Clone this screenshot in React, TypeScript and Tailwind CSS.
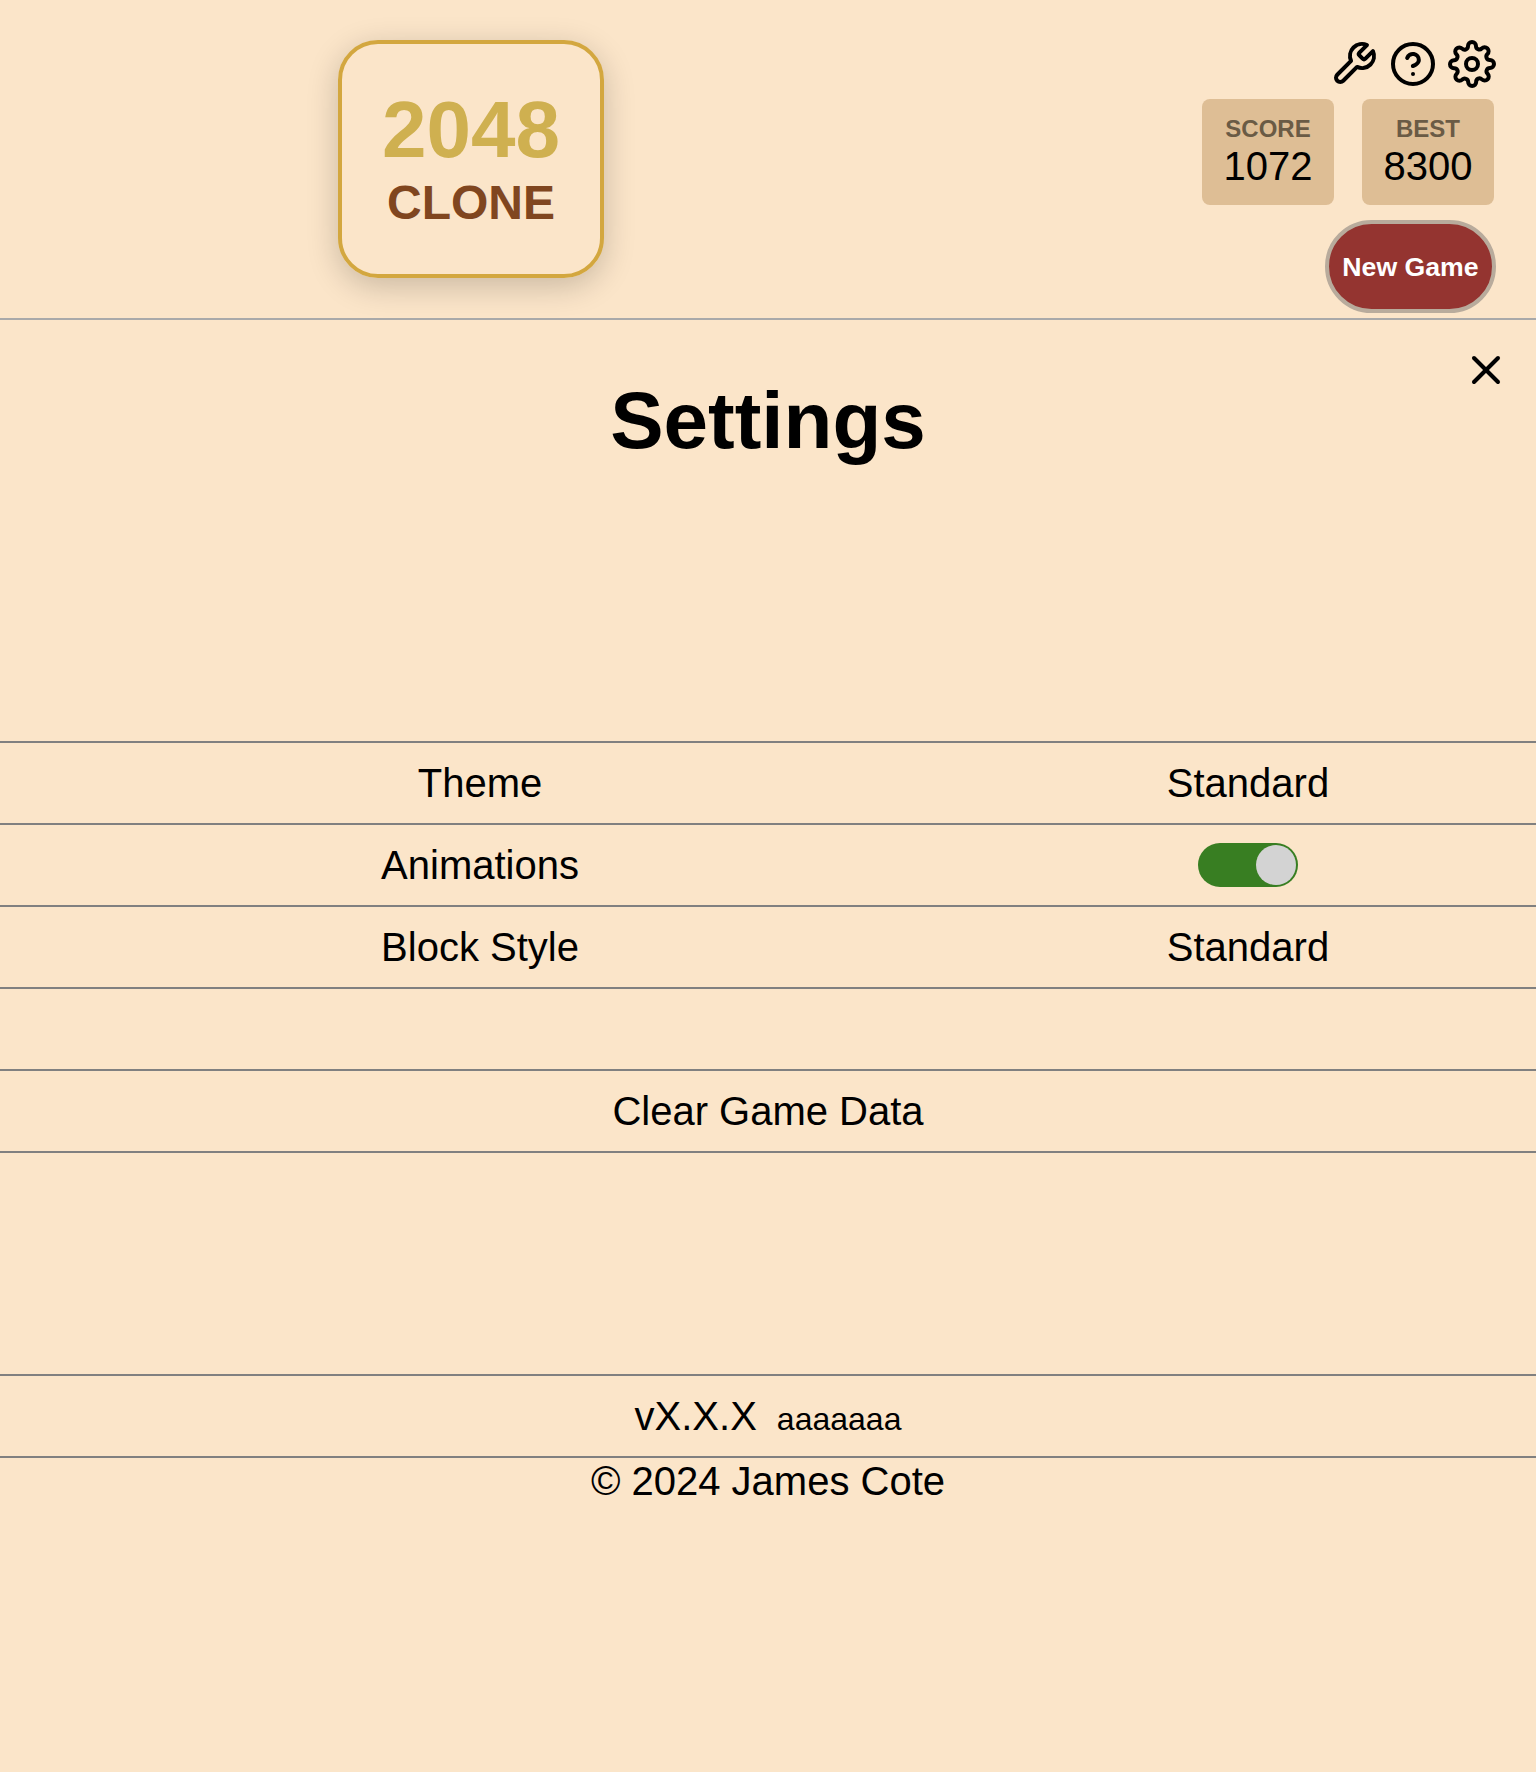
import type { ReactNode } from 'react';
import { FiHelpCircle, FiSettings, FiTool, FiX } from 'react-icons/fi';

function ScoreBox({ label, value }: { label: string; value: number }) {
  return (
    <div className="flex h-[106px] w-[132px] flex-col items-center rounded-lg bg-[#debe95] pt-4">
      <span className="text-2xl leading-[28px] font-bold text-[#6a5b45]">{label}</span>
      <span className="text-[40px] leading-[46px]">{value}</span>
    </div>
  );
}

function SettingRow({ label, children }: { label: string; children: ReactNode }) {
  return (
    <div className="grid h-[82px] grid-cols-[5fr_3fr] items-center border-b-2 border-[#808080] text-center">
      <span>{label}</span>
      <div className="flex justify-center">{children}</div>
    </div>
  );
}

export default function App() {
  return (
    <div className="flex h-[1772px] w-full flex-col overflow-hidden bg-[#fbe5c9] font-['Liberation_Sans',Arial,sans-serif] text-[40px] leading-[46px] text-black">
      <header className="flex h-[320px] items-start justify-between border-b-2 border-[#a9a9a9] pt-10 pr-10 pl-[338px]">
        <div className="flex h-[238px] w-[266px] flex-col items-center rounded-[40px] border-4 border-[#d3a73f] pt-10 font-bold shadow-[0_8px_32px_rgba(0,0,0,0.2)]">
          <span className="text-[80px] leading-[92px] text-[#cfb050]">2048</span>
          <span className="text-5xl leading-[54px] text-[#80461f]">CLONE</span>
        </div>
        <div className="flex flex-col items-end">
          <nav className="flex gap-[11px]">
            <FiTool size={48} />
            <FiHelpCircle size={48} />
            <FiSettings size={48} />
          </nav>
          <div className="mt-[11px] mr-0.5 flex gap-7">
            <ScoreBox label="SCORE" value={1072} />
            <ScoreBox label="BEST" value={8300} />
          </div>
          <button className="mt-[15px] h-[93px] w-[171px] rounded-[46.5px] border-4 border-[#b8ab9c] bg-[#943430] pt-px text-[26.67px] leading-none font-bold whitespace-nowrap text-white">
            New Game
          </button>
        </div>
      </header>
      <main>
        <div className="flex h-[50px] justify-end pt-[26px] pr-[26px]">
          <FiX size={48} className="shrink-0" />
        </div>
        <h1 className="h-[371px] text-center text-[80px] leading-[101px] font-bold">Settings</h1>
        <section className="border-t-2 border-[#808080]">
          <SettingRow label="Theme">Standard</SettingRow>
          <SettingRow label="Animations">
            <span className="flex h-11 w-[100px] justify-end rounded-full bg-[#387e22] p-0.5">
              <span className="size-10 rounded-full bg-[#d3d3d3]" />
            </span>
          </SettingRow>
          <SettingRow label="Block Style">Standard</SettingRow>
          <div className="h-[82px] border-b-2 border-[#808080]" />
          <div className="flex h-[82px] items-center justify-center border-b-2 border-[#808080]">Clear Game Data</div>
        </section>
        <footer className="mt-[221px]">
          <div className="flex h-[84px] items-center justify-center border-y-2 border-[#808080] pt-0.5">
            <div className="flex items-baseline gap-5">
              <span>vX.X.X</span>
              <span className="text-[32px]">aaaaaaa</span>
            </div>
          </div>
          <p className="text-center">© 2024 James Cote</p>
        </footer>
      </main>
    </div>
  );
}
